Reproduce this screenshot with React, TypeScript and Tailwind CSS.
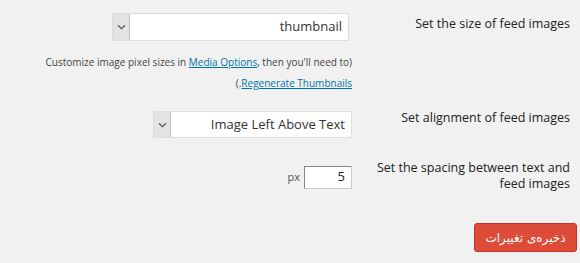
import React from 'react';

const Arrow = () => (
  <div className="flex h-full w-[17px] shrink-0 items-center justify-center border-r border-[#bdbdbd] bg-[#e3e3e3]">
    <svg width="9" height="6" viewBox="0 0 9 6">
      <path d="M1 1.2 L4.5 4.6 L8 1.2" fill="none" stroke="#555" strokeWidth="1.2" />
    </svg>
  </div>
);

export default function App() {
  return (
    <div
      dir="rtl"
      className="h-[263px] w-[580px] bg-[#f1f1f1] text-[#333] overflow-hidden"
      style={{ fontFamily: '"Open Sans", "Noto Sans", sans-serif' }}
    >
      <div className="flex flex-col pr-[10px] pt-[13px]">
        {/* size row */}
        <div className="flex">
          <div className="w-[218px] shrink-0 pt-[2px] text-right text-[12.5px] leading-[18px] text-[#222]">
            Set the size of feed images
          </div>
          <div className="flex flex-col items-start">
            <div dir="ltr" className="mr-[3px] flex h-[28px] w-[237px] items-center border border-[#ddd] bg-white">
              <Arrow />
              <span className="flex-1 pr-[6px] text-right text-[13px] text-[#333]">thumbnail</span>
            </div>
            <div dir="ltr" className="mt-[11px] w-[330px] text-right text-[10px] leading-[21px] text-[#444]">
              <div>
                Customize image pixel sizes in <a className="text-[#0073aa] underline">Media Options</a>, then you'll need to)
              </div>
              <div>
                (.<a className="text-[#0073aa] underline">Regenerate Thumbnails</a>
              </div>
            </div>
          </div>
        </div>

        {/* alignment row */}
        <div className="mt-[17px] flex">
          <div className="-mt-[2px] w-[218px] shrink-0 text-right text-[12.5px] leading-[18px] text-[#222]">
            Set alignment of feed images
          </div>
          <div dir="ltr" className="flex h-[27px] w-[199px] items-center border border-[#ddd] bg-white">
            <Arrow />
            <span className="flex-1 pr-[6px] text-right text-[13px] text-[#333]">Image Left Above Text</span>
          </div>
        </div>

        {/* spacing row */}
        <div className="mt-[20px] flex">
          <div className="w-[218px] shrink-0 pt-[2px] text-right text-[12.5px] leading-[16px] text-[#222]">
            Set the spacing between text and feed images
          </div>
          <div dir="ltr" className="mt-[4px] flex items-center gap-[4px]">
            <span className="text-[11px] text-[#555]">px</span>
            <div className="flex h-[23px] w-[48px] items-center justify-end border border-[#ccc] border-t-[#888] border-l-[#888] bg-white pr-[6px] text-[13px] text-[#222]">
              5
            </div>
          </div>
        </div>

        {/* submit */}
        <div className="mt-[31px] flex">
          <button className="h-[29px] w-[103px] -mr-[7px] rounded-[3px] border border-[#c9302c] bg-[#dd4b39] text-[12px] text-white" style={{ fontFamily: 'Tahoma, "DejaVu Sans", sans-serif' }}>
            ذخیره‌ی تغییرات
          </button>
        </div>
      </div>
    </div>
  );
}
